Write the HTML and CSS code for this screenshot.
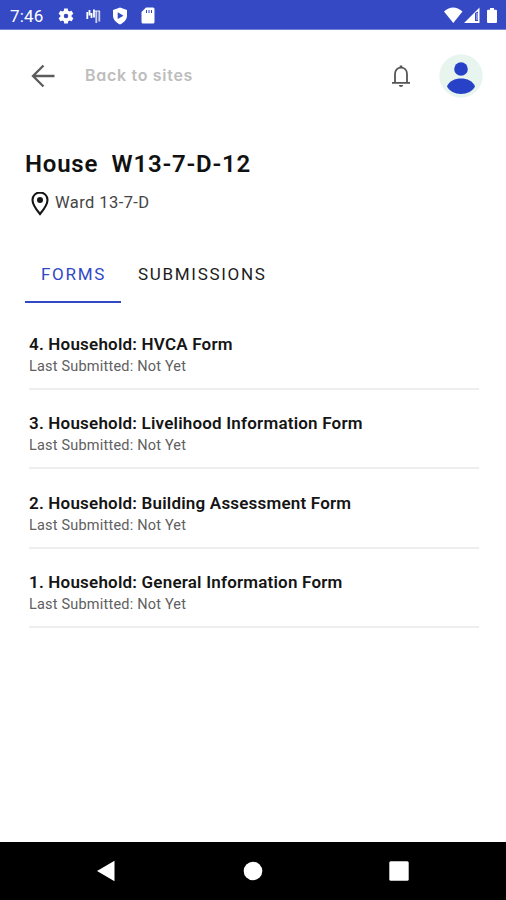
FILE: index.html
```html
<!DOCTYPE html>
<html lang="en">
<head>
<meta charset="utf-8">
<title>House W13-7-D-12</title>
<link rel="stylesheet" href="styles.css">
</head>
<body>
<div class="screen">
  <div class="status">
    <span class="time">7:46</span>
    <svg class="gear" width="18" height="18" viewBox="0 0 24 24" fill="#fff"><path d="M19.4 13a7.500 7.500 0 0 0 0-2l2.100-1.700c.2-.1.200-.4.100-.6l-2-3.500c-.1-.2-.4-.3-.6-.2l-2.500 1a7.300 7.300 0 0 0-1.700-1l-.4-2.600c0-.2-.2-.4-.5-.4h-4c-.2 0-.5.200-.5.400L9.100 5a7.700 7.700 0 0 0-1.700 1l-2.500-1c-.2-.1-.5 0-.6.200l-2 3.500c-.1.200-.1.500.1.600L4.500 11a8 8 0 0 0 0 2l-2.100 1.700c-.2.100-.2.400-.1.600l2 3.500c.1.200.4.300.6.200l2.500-1c.5.400 1.100.7 1.700 1l.4 2.600c0 .2.200.4.500.4h4c.3 0 .5-.2.500-.4l.4-2.600c.6-.3 1.200-.6 1.700-1l2.500 1c.2.100.5 0 .6-.2l2-3.500c.1-.2.100-.5-.1-.6zM12 15a3 3 0 1 1 0-6 3 3 0 0 1 0 6z"/></svg>
    <svg class="bars" width="15" height="16" viewBox="0 0 15 16" fill="none" stroke="#fff" stroke-width="1.800"><path d="M1.300 4v7M3.500 2v5.500M5.500 5v5M8 1.500v8" /><path d="M10.300 3v12M13.300 3v10.500" opacity=".75"/><path d="M7 3h7" opacity=".5"/></svg>
    <svg class="shield" width="16" height="18" viewBox="0 0 16 18"><path d="M8 .5 15 3v5.500c0 4-2.800 7-7 9-4.200-2-7-5-7-9V3z" fill="#fff"/><path d="m5.700 5.300 5.800 3.400-5.800 3.400z" fill="#3449c3"/></svg>
    <svg class="sd" width="14" height="17" viewBox="0 0 14 17"><path d="M5 .5h7q1.500 0 1.500 1.500v13q0 1.500-1.500 1.500H2Q.5 16.500.5 15V5z" fill="#fff"/><path d="M5.500 3v3M8 3v3M10.500 3v3" stroke="#3449c3" stroke-width="1"/></svg>
    <svg class="signals" width="56" height="18" viewBox="0 0 56 18" fill="#fff"><path d="M0 4.500Q9-3.500 18.500 4.500L9.300 16z"/><path fill-rule="evenodd" d="M20 16 35.500.500V16zM31 6v8h3V4.500z"/><path d="M33 6v7" stroke="#fff" stroke-width=".8"/><path d="M46 1h4v1.700h2q1 0 1 1V15q0 1-1 1h-8q-1 0-1-1V3.700q0-1 1-1h2z"/></svg>
  </div>
  <header class="header">
    <svg class="back" width="24" height="24" viewBox="0 0 24 24" fill="none" stroke="#5c5c5c" stroke-width="2.300"><path d="M23.500 12H2M12.500 1.500 2 12l10.500 10.500"/></svg>
    <span class="back-label">Back to sites</span>
    <svg class="bell" width="20" height="24" viewBox="0 0 20 24"><path d="M4 18.500V10c0-4 2.500-6.400 6-6.400s6 2.400 6 6.400v8.500M1 18.800h18" fill="none" stroke="#555" stroke-width="1.800"/><path d="M8.700 1.500h2.600v2H8.700zM7.800 21h4.400q-.3 2-2.200 2t-2.200-2z" fill="#555"/></svg>
    <svg class="avatar" width="44" height="44" viewBox="0 0 44 44"><circle cx="22" cy="22" r="21.700" fill="#e7f5ee"/><g fill="#2742c6"><circle cx="22" cy="15" r="6.800"/><path d="M8 32.500c2-5.500 8-8 14-8s12 2.500 14 8c-2 4.500-8 7.500-14 7.500s-12-3-14-7.500z"/></g></svg>
  </header>
  <main class="main">
    <h1 class="title">House&nbsp; W13-7-D-12</h1>
    <div class="place">
      <svg class="pin" width="18" height="25" viewBox="0 0 18 25"><path d="M9 1.500c-4.300 0-7.500 3.200-7.500 7.400C1.500 14 9 23 9 23s7.500-9 7.500-14.100c0-4.200-3.200-7.400-7.500-7.400z" fill="none" stroke="#151515" stroke-width="2.100"/><circle cx="9" cy="9" r="3" fill="#151515"/></svg>
      <span class="ward">Ward 13-7-D</span>
    </div>
    <nav class="tabs"><span class="tab active">FORMS</span><span class="tab">SUBMISSIONS</span></nav>
    <section class="list">
      <article class="form"><h2 class="name">4. Household: HVCA Form</h2><p class="last">Last Submitted: Not Yet</p></article>
      <article class="form"><h2 class="name">3. Household: Livelihood Information Form</h2><p class="last">Last Submitted: Not Yet</p></article>
      <article class="form"><h2 class="name">2. Household: Building Assessment Form</h2><p class="last">Last Submitted: Not Yet</p></article>
      <article class="form"><h2 class="name">1. Household: General Information Form</h2><p class="last">Last Submitted: Not Yet</p></article>
    </section>
  </main>
  <footer class="navbar">
    <svg width="20" height="22" viewBox="0 0 20 22" fill="#fff"><path d="M1 11 18.500.8v20.400z"/></svg>
    <svg width="20" height="20" viewBox="0 0 20 20" fill="#fff"><circle cx="10" cy="10" r="9.300"/></svg>
    <svg width="20" height="20" viewBox="0 0 20 20" fill="#fff"><rect x=".3" y=".3" width="19.400" height="19.400" rx="1.500"/></svg>
  </footer>
</div>
</body>
</html>
```
FILE: styles.css
```css
* { box-sizing: border-box; }
body { margin: 0; background: #fff; font-family: Roboto, "Liberation Sans", sans-serif; }
h1, h2, p { margin: 0; white-space: nowrap; }
svg { display: block; flex: none; }
.screen { width: 506px; height: 900px; display: flex; flex-direction: column; overflow: hidden; }
.status { height: 30px; flex: none; display: flex; align-items: center; background: #3449c3; padding: 2px 6px 0 10px; color: #fff; border-bottom: 1px solid #7483d6; }
.time { width: 47px; font-size: 17px; letter-spacing: .2px; line-height: 20px; }
.bars { margin-left: 11px; }
.shield { margin-left: 11px; }
.sd { margin-left: 13px; }
.signals { margin-left: auto; }
.header { height: 92px; flex: none; display: flex; align-items: center; padding: 0 23px 0 31px; }
.back-label { margin: -3px 0 0 30px; font: 600 16px/20px Inter, sans-serif; font-feature-settings: "cv11"; letter-spacing: .7px; color: #bdbdbd; }
.bell { margin-left: auto; }
.avatar { margin-left: 28px; }
.main { flex: 1; padding: 27px 25px 0; }
.title { font-size: 24px; line-height: 30px; font-weight: 600; letter-spacing: .78px; color: #111; }
.place { display: flex; align-items: center; height: 26px; margin-top: 12px; padding-left: 6px; }
.ward { margin: -3px 0 0 6px; font-size: 16.500px; line-height: 20px; letter-spacing: .42px; color: #444; }
.pin { margin-top: -1px; }
.tabs { display: flex; margin-top: 28px; }
.tab { height: 58px; padding: 19px 15px 0 17px; font-size: 17px; line-height: 20px; letter-spacing: 1.700px; color: #1c1c1c; }
.tab.active { width: 96px; padding-left: 16px; color: #3048c5; border-bottom: 2px solid #3048c5; }
.list { padding: 18px 2px 0 4px; }
.form { height: 79.300px; padding-top: 13px; }
.form::after { content: ""; display: block; height: 2px; margin-top: 11px; background: #eee; }
.name { font-size: 17px; line-height: 20px; font-weight: 600; letter-spacing: .2px; color: #151515; }
.last { margin-top: 3px; font-size: 14.500px; line-height: 20px; letter-spacing: .2px; color: #606060; }
.navbar { height: 58px; flex: none; display: flex; justify-content: space-between; align-items: center; padding: 0 97px 0 96px; background: #000; }
```
